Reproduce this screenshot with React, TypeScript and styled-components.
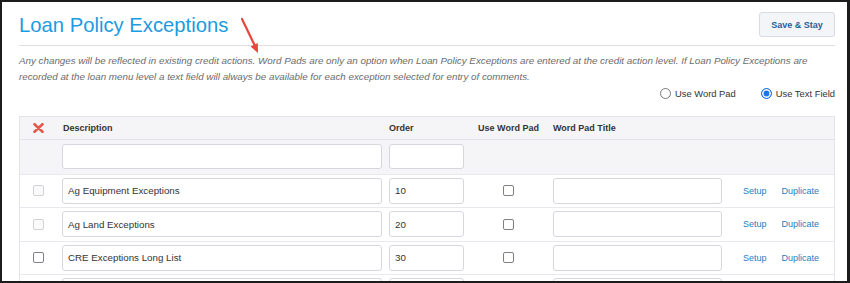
import React from "react";
import styled, { createGlobalStyle } from "styled-components";

const GlobalStyle = createGlobalStyle`
  html, body { margin: 0; padding: 0; background: #ffffff; }
  body { font-family: "Liberation Sans", Arial, sans-serif; color: #333; }
  * { box-sizing: border-box; }
`;

const Frame = styled.div`
  position: relative;
  width: 850px;
  height: 283px;
  border: 2px solid #1c1c1c;
  border-right-width: 3px;
  overflow: hidden;
  background: #fff;
  padding: 10px 12px 0 17px;
`;

const HeaderBar = styled.div`
  display: flex;
  justify-content: space-between;
  align-items: flex-start;
  padding-bottom: 8px;
  border-bottom: 1px solid #dedede;
`;

const Title = styled.h1`
  margin: 1.5px 0 0;
  font-size: 20.25px;
  line-height: 23px;
  font-weight: normal;
  color: #1b9be0;
`;

const SaveButton = styled.button`
  width: 76px;
  height: 25px;
  padding: 0;
  border: 1px solid #d9dae2;
  border-radius: 3px;
  background: #f4f5f8;
  color: #1f5f97;
  font-family: "Liberation Sans", Arial, sans-serif;
  font-weight: bold;
  font-size: 9px;
  cursor: pointer;
`;

const Notice = styled.p`
  margin: 7px 0 0;
  font-size: 9.8px;
  line-height: 16px;
  font-style: italic;
  color: #6b6b6b;
  white-space: nowrap;
`;

const RadioRow = styled.div`
  display: flex;
  justify-content: flex-end;
  align-items: center;
  gap: 25px;
  height: 16px;
`;

const RadioLabel = styled.label`
  display: flex;
  align-items: center;
  gap: 4px;
  font-size: 9.4px;
  color: #333;
`;

const Radio = styled.input`
  appearance: none;
  margin: 0;
  width: 11px;
  height: 11px;
  border-radius: 50%;
  border: 1px solid #7a7a7a;
  background: #fff;
  &:checked {
    border-color: #1a73e8;
    background: #1a73e8;
    box-shadow: inset 0 0 0 1.6px #fff;
  }
`;

const Table = styled.div`
  margin-top: 15px;
  border: 1px solid #e3e3ea;
`;

const Row = styled.div<{ $variant: "head" | "filter" | "data" }>`
  display: grid;
  grid-template-columns: 42px 320px 82px 89px 169px 1fr;
  align-items: center;
  background: ${(p) => (p.$variant === "data" ? "#ffffff" : "#f5f5f7")};
  border-bottom: ${(p) => (p.$variant === "head" ? "1.5px solid #e2e2ea" : "1px solid #e8e8ee")};
  min-height: ${(p) => (p.$variant === "head" ? "22.5px" : "auto")};
  padding: ${(p) =>
    p.$variant === "filter" ? "4px 0 5px" : p.$variant === "data" ? "3px 0 3.5px" : "0"};
`;

const Cell = styled.div<{ $pad?: number; $center?: boolean }>`
  display: flex;
  align-items: center;
  justify-content: ${(p) => (p.$center ? "center" : "flex-start")};
  padding-left: ${(p) => p.$pad ?? 0}px;
`;

const HeadText = styled.span`
  font-size: 9px;
  font-weight: bold;
  color: #333;
`;

const TextInput = styled.input<{ $h?: number }>`
  width: 100%;
  height: ${(p) => p.$h ?? 26}px;
  margin: 0;
  padding: 0 5px;
  border: 1px solid #d6d7de;
  border-radius: 3px;
  background: #fff;
  font-family: "Liberation Sans", Arial, sans-serif;
  font-size: 9.75px;
  color: #333;
  outline: none;
`;

const Check = styled.input<{ $muted?: boolean }>`
  appearance: none;
  margin: 0;
  width: 11px;
  height: 11px;
  border-radius: 2px;
  border: 1px solid ${(p) => (p.$muted ? "#d2d2d6" : "#7f7f85")};
  background: ${(p) => (p.$muted ? "#fafafa" : "#fff")};
`;

const Links = styled.div`
  display: flex;
  gap: 15px;
  padding-left: 21px;
`;

const Link = styled.a`
  font-size: 9px;
  color: #2b7bbf;
  text-decoration: none;
  cursor: pointer;
`;

const Arrow = styled.svg`
  position: absolute;
  left: 232px;
  top: 14px;
  pointer-events: none;
`;

const DeleteIcon = () => (
  <svg width="11" height="10" viewBox="0 0 11 10">
    <path d="M1.5 1.2 L9.5 8.8 M9.5 1.2 L1.5 8.8" stroke="#e05a4e" strokeWidth="2.6" strokeLinecap="round" />
  </svg>
);

const rows = [
  { name: "Ag Equipment Exceptions", order: "10", muted: true, links: true },
  { name: "Ag Land Exceptions", order: "20", muted: true, links: true },
  { name: "CRE Exceptions Long List", order: "30", muted: false, links: true },
  { name: "", order: "", muted: false, links: false },
];

export default function App() {
  return (
    <>
      <GlobalStyle />
      <Frame>
        <HeaderBar>
          <Title>Loan Policy Exceptions</Title>
          <SaveButton>Save &amp; Stay</SaveButton>
        </HeaderBar>
        <Notice>
          Any changes will be reflected in existing credit actions. Word Pads are only an option when Loan Policy
          Exceptions are entered at the credit action level. If Loan Policy Exceptions are
          <br />
          recorded at the loan menu level a text field will always be available for each exception selected for
          entry of comments.
        </Notice>
        <RadioRow>
          <RadioLabel>
            <Radio type="radio" name="mode" readOnly />
            Use Word Pad
          </RadioLabel>
          <RadioLabel>
            <Radio type="radio" name="mode" defaultChecked />
            Use Text Field
          </RadioLabel>
        </RadioRow>
        <Table>
          <Row $variant="head">
            <Cell $pad={13}>
              <DeleteIcon />
            </Cell>
            <Cell $pad={1}>
              <HeadText>Description</HeadText>
            </Cell>
            <Cell $pad={7}>
              <HeadText>Order</HeadText>
            </Cell>
            <Cell $center>
              <HeadText>Use Word Pad</HeadText>
            </Cell>
            <Cell>
              <HeadText>Word Pad Title</HeadText>
            </Cell>
            <Cell />
          </Row>
          <Row $variant="filter">
            <Cell />
            <Cell>
              <TextInput $h={25} />
            </Cell>
            <Cell $pad={7}>
              <TextInput $h={25} />
            </Cell>
            <Cell />
            <Cell />
            <Cell />
          </Row>
          {rows.map((r, i) => (
            <Row $variant="data" key={i}>
              <Cell $pad={13}>
                <Check type="checkbox" $muted={r.muted} />
              </Cell>
              <Cell>
                <TextInput defaultValue={r.name} />
              </Cell>
              <Cell $pad={7}>
                <TextInput defaultValue={r.order} />
              </Cell>
              <Cell $center>
                <Check type="checkbox" />
              </Cell>
              <Cell>
                <TextInput />
              </Cell>
              {r.links ? (
                <Links>
                  <Link>Setup</Link>
                  <Link>Duplicate</Link>
                </Links>
              ) : (
                <Cell />
              )}
            </Row>
          ))}
        </Table>
        <Arrow width="32" height="42" viewBox="0 0 32 42">
          <line x1="8" y1="3" x2="21" y2="30" stroke="#e8453c" strokeWidth="2.2" strokeLinecap="round" />
          <polygon points="24,37 16.5,30.6 23.8,27.1" fill="#e8453c" />
        </Arrow>
      </Frame>
    </>
  );
}
